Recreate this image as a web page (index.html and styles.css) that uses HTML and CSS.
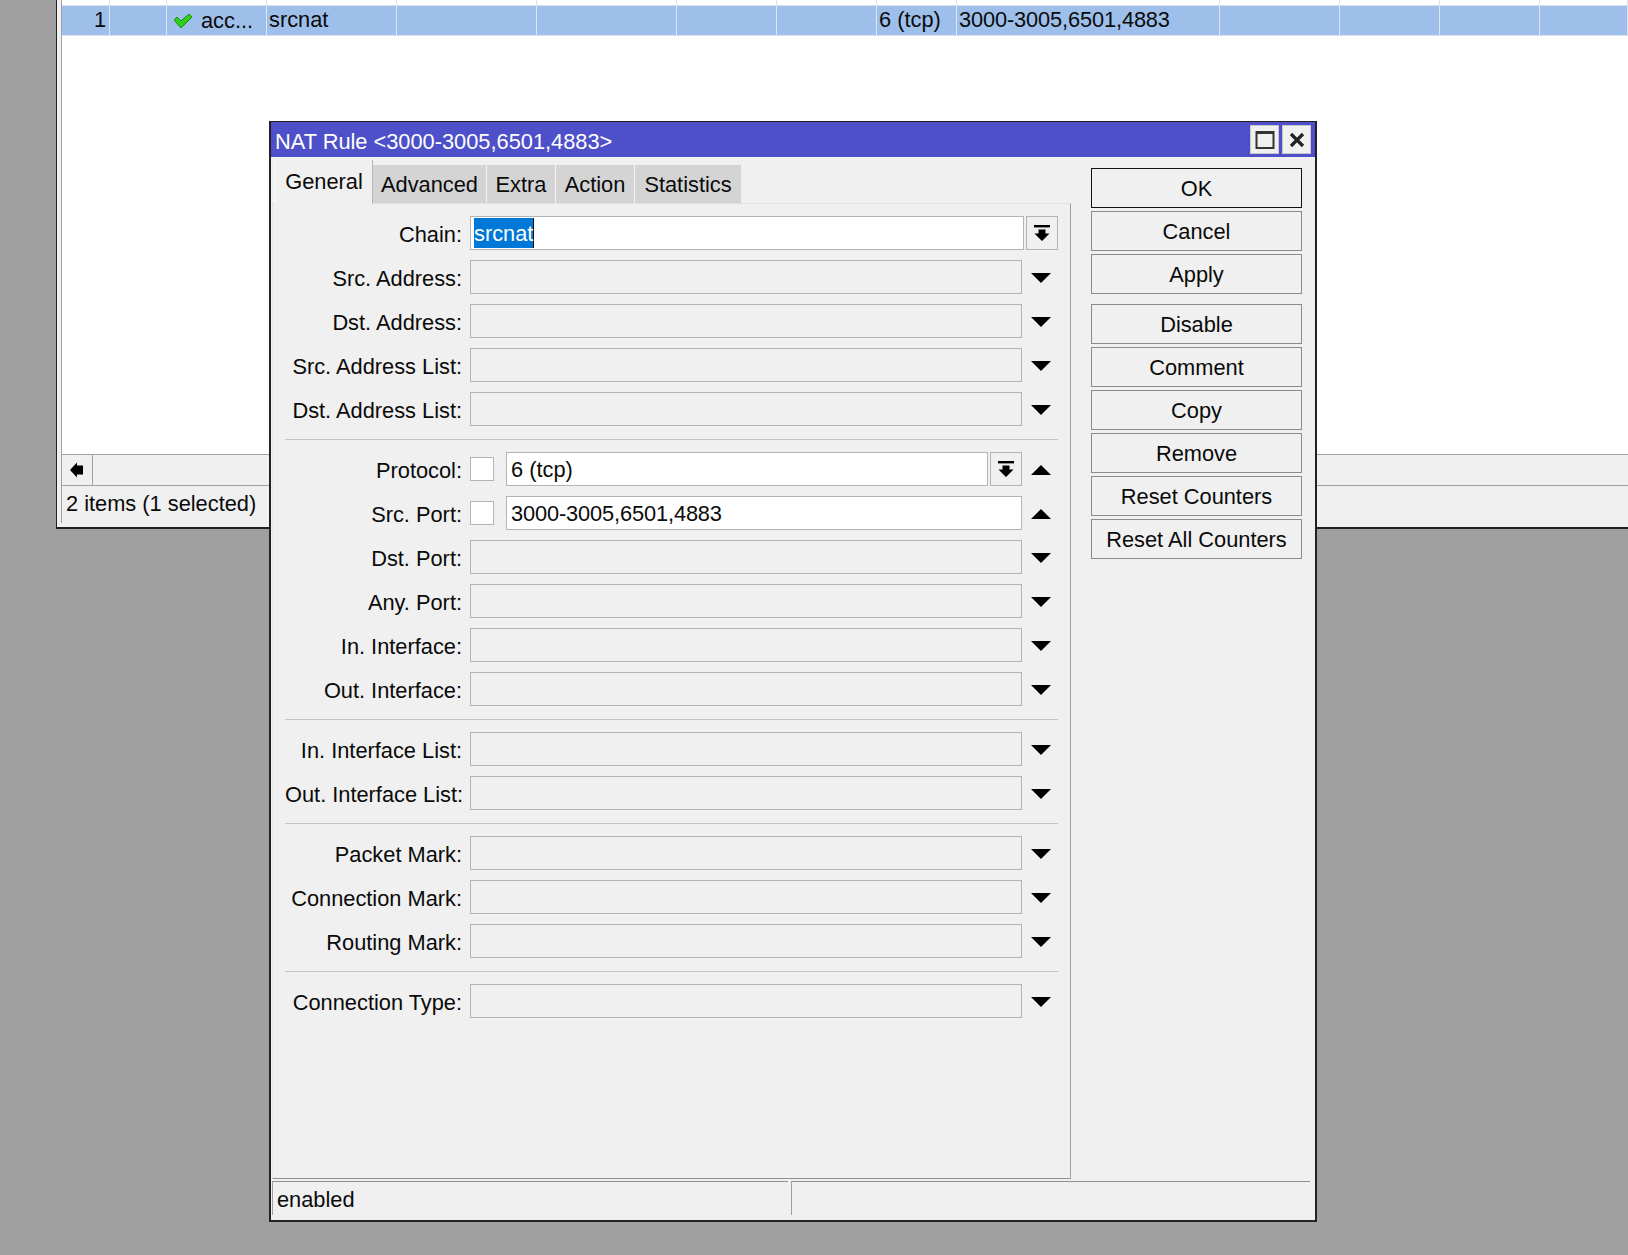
FILE: index.html
```html
<!DOCTYPE html>
<html lang="en">
<head>
    <meta charset="UTF-8">
    <title>NAT Rule</title>
    <link rel="stylesheet" href="styles.css">
</head>
<body>
    <div class="list-window">
        <div class="list-table">
            <div class="list-row list-row-blank">
                <span></span><span></span><span></span><span></span><span></span><span></span><span></span><span></span><span></span><span></span><span></span><span></span><span></span><span></span>
            </div>
            <div class="list-row list-row-selected">
                <span class="cell-num">1</span>
                <span></span>
                <span class="cell-action">
                    <svg class="check-icon" width="20" height="16" viewBox="0 0 20 16"><path d="M1 7 L4 4 L8 8 L16 1 L19 4 L8 15 Z" fill="#2fd016" stroke="#1c8a10" stroke-width="1"/></svg>
                    acc...
                </span>
                <span>srcnat</span>
                <span></span>
                <span></span>
                <span></span>
                <span></span>
                <span>6 (tcp)</span>
                <span class="digits">3000-3005,6501,4883</span>
                <span></span>
                <span></span>
                <span></span>
                <span></span>
            </div>
        </div>
        <div class="list-scroll">
            <div class="scroll-btn">
                <svg width="14" height="16" viewBox="0 0 14 16"><path d="M0 8 L7 0.5 V3.5 H13 V12.5 H7 V15.5 Z" fill="#000"/></svg>
            </div>
        </div>
        <div class="list-status">2 items (1 selected)</div>
    </div>

    <div class="dialog">
        <div class="title-bar">
            <span class="title-text">NAT Rule &lt;3000-3005,6501,4883&gt;</span>
            <button class="title-btn">
                <svg width="20" height="20" viewBox="0 0 20 20"><rect x="1.5" y="2" width="17" height="16" fill="none" stroke="#333" stroke-width="2"/><rect x="1" y="1" width="18" height="3" fill="#333"/></svg>
            </button>
            <button class="title-btn">
                <svg width="16" height="16" viewBox="0 0 16 16"><path d="M2 2 L14 14 M14 2 L2 14" stroke="#222" stroke-width="3.2" fill="none"/></svg>
            </button>
        </div>

        <div class="dialog-main">
            <div class="left-col">
                <div class="tabs">
                    <div class="tab tab-active">General</div>
                    <div class="tab tab-advanced">Advanced</div>
                    <div class="tab tab-extra">Extra</div>
                    <div class="tab tab-action">Action</div>
                    <div class="tab tab-stats">Statistics</div>
                </div>
                <div class="panel">
                    <div class="form-row">
                        <label>Chain:</label>
                        <div class="field field-white field-chain"><span class="selected-text">srcnat</span></div>
                        <div class="drop-btn">
                            <svg width="16" height="16" viewBox="0 0 16 16"><rect x="0" y="0" width="16" height="2.4" fill="#000"/><path d="M4.5 4.5 H11.5 V8.5 H15.5 L8 16 L0.5 8.5 H4.5 Z" fill="#000"/></svg>
                        </div>
                    </div>
                    <div class="form-row">
                        <label>Src. Address:</label>
                        <div class="field"></div>
                        <i class="arrow-down"></i>
                    </div>
                    <div class="form-row">
                        <label>Dst. Address:</label>
                        <div class="field"></div>
                        <i class="arrow-down"></i>
                    </div>
                    <div class="form-row">
                        <label>Src. Address List:</label>
                        <div class="field"></div>
                        <i class="arrow-down"></i>
                    </div>
                    <div class="form-row">
                        <label>Dst. Address List:</label>
                        <div class="field"></div>
                        <i class="arrow-down"></i>
                    </div>
                    <hr class="divider">
                    <div class="form-row">
                        <label>Protocol:</label>
                        <div class="not-box"></div>
                        <div class="field field-white field-grow">6 (tcp)</div>
                        <div class="drop-btn">
                            <svg width="16" height="16" viewBox="0 0 16 16"><rect x="0" y="0" width="16" height="2.4" fill="#000"/><path d="M4.5 4.5 H11.5 V8.5 H15.5 L8 16 L0.5 8.5 H4.5 Z" fill="#000"/></svg>
                        </div>
                        <i class="arrow-up"></i>
                    </div>
                    <div class="form-row">
                        <label>Src. Port:</label>
                        <div class="not-box"></div>
                        <div class="field field-white field-port digits">3000-3005,6501,4883</div>
                        <i class="arrow-up"></i>
                    </div>
                    <div class="form-row">
                        <label>Dst. Port:</label>
                        <div class="field"></div>
                        <i class="arrow-down"></i>
                    </div>
                    <div class="form-row">
                        <label>Any. Port:</label>
                        <div class="field"></div>
                        <i class="arrow-down"></i>
                    </div>
                    <div class="form-row">
                        <label>In. Interface:</label>
                        <div class="field"></div>
                        <i class="arrow-down"></i>
                    </div>
                    <div class="form-row">
                        <label>Out. Interface:</label>
                        <div class="field"></div>
                        <i class="arrow-down"></i>
                    </div>
                    <hr class="divider">
                    <div class="form-row">
                        <label>In. Interface List:</label>
                        <div class="field"></div>
                        <i class="arrow-down"></i>
                    </div>
                    <div class="form-row">
                        <label>Out. Interface List:</label>
                        <div class="field"></div>
                        <i class="arrow-down"></i>
                    </div>
                    <hr class="divider">
                    <div class="form-row">
                        <label>Packet Mark:</label>
                        <div class="field"></div>
                        <i class="arrow-down"></i>
                    </div>
                    <div class="form-row">
                        <label>Connection Mark:</label>
                        <div class="field"></div>
                        <i class="arrow-down"></i>
                    </div>
                    <div class="form-row">
                        <label>Routing Mark:</label>
                        <div class="field"></div>
                        <i class="arrow-down"></i>
                    </div>
                    <hr class="divider">
                    <div class="form-row">
                        <label>Connection Type:</label>
                        <div class="field"></div>
                        <i class="arrow-down"></i>
                    </div>
                </div>
            </div>

            <div class="button-col">
                <button class="btn btn-default">OK</button>
                <button class="btn">Cancel</button>
                <button class="btn">Apply</button>
                <button class="btn btn-spaced">Disable</button>
                <button class="btn">Comment</button>
                <button class="btn">Copy</button>
                <button class="btn">Remove</button>
                <button class="btn">Reset Counters</button>
                <button class="btn">Reset All Counters</button>
            </div>
        </div>

        <div class="status-bar">
            <div class="status-cell">enabled</div>
            <div class="status-rest"></div>
        </div>
    </div>
</body>
</html>
```

FILE: styles.css
```css
:root {
    --bg-color: #f0f0f0;
    --border-color: #a0a0a0;
    --text-color: #0a0a0a;
}

* {
    box-sizing: border-box;
    margin: 0;
    padding: 0;
}

html, body {
    height: 100%;
    overflow: hidden;
}

body {
    position: relative;
    background-color: #a0a0a0;
    color: var(--text-color);
    font-family: "Liberation Sans", Arial, sans-serif;
    font-size: 21.8px;
}

.digits {
    letter-spacing: -0.13px;
}

/* window behind the dialog */
.list-window {
    position: absolute;
    left: 56px;
    top: 0;
    width: 1572px;
    height: 529px;
    display: flex;
    flex-direction: column;
    background-color: var(--bg-color);
    border-left: 1px solid #222;
    border-bottom: 2px solid #222;
    padding-left: 4px;
    padding-bottom: 4px;
}

.list-table {
    height: 455px;
    background-color: white;
    border-left: 1px solid var(--border-color);
    border-bottom: 1px solid var(--border-color);
}

.list-row {
    display: grid;
    grid-template-columns: 48px 57px 100px 130px 140px 140px 100px 100px 80px 263px 120px 100px 100px 1fr;
}

.list-row > span {
    border-right: 1px solid #e2e2e2;
    padding-left: 2px;
}

.list-row-blank {
    height: 5px;
}

.list-row-selected {
    height: 31px;
    line-height: 28px;
    background-color: #9dbfea;
    border-top: 1px solid #dbe3ee;
    border-bottom: 1px solid #dbe3ee;
}

.list-row-selected > span {
    border-right-color: #dce8f6;
}

.list-row-selected .cell-num {
    text-align: right;
    padding-right: 3px;
}

.cell-action {
    display: flex;
    align-items: center;
    gap: 8px;
    padding-left: 6px !important;
}

.list-scroll {
    height: 31px;
    border-left: 1px solid var(--border-color);
    border-bottom: 1px solid var(--border-color);
}

.scroll-btn {
    width: 31px;
    height: 30px;
    display: flex;
    align-items: center;
    justify-content: center;
    border-right: 1px solid var(--border-color);
}

.list-status {
    flex: 1;
    line-height: 36px;
    padding-left: 4px;
    border-left: 1px solid var(--border-color);
}

/* NAT rule dialog */
.dialog {
    position: absolute;
    left: 269px;
    top: 121px;
    width: 1048px;
    height: 1101px;
    display: flex;
    flex-direction: column;
    background-color: var(--bg-color);
    border: 2px solid #222;
    border-top-width: 1px;
}

.title-bar {
    height: 35px;
    flex: none;
    display: flex;
    align-items: center;
    gap: 3px;
    padding-right: 4px;
    background-color: #4d50c9;
    color: white;
}

.title-text {
    flex: 1;
    padding-top: 4px;
    padding-left: 4px;
}

.title-btn {
    width: 29px;
    height: 29px;
    display: flex;
    align-items: center;
    justify-content: center;
    background-color: var(--bg-color);
    border: 1px solid #c8c8c8;
}

.dialog-main {
    flex: 1;
    display: flex;
    min-height: 0;
}

.left-col {
    width: 799px;
    margin-left: 1px;
    display: flex;
    flex-direction: column;
}

.tabs {
    height: 46px;
    flex: none;
    display: flex;
    align-items: flex-end;
    padding-left: 3px;
}

.tab {
    height: 38px;
    padding-top: 1px;
    display: flex;
    align-items: center;
    justify-content: center;
    background-color: #d4d4d4;
    border-right: 1px solid #f4f4f4;
}

.tab-active {
    width: 98px;
    height: 44px;
    padding-top: 0;
    background-color: var(--bg-color);
    border-left: 1px solid #fafafa;
    border-right: 1px solid #b8b8b8;
    margin-bottom: -1px;
    position: relative;
}

.tab-advanced { width: 114px; }
.tab-extra { width: 69px; }
.tab-action { width: 79px; }
.tab-stats { width: 106px; border-right: none; }

.panel {
    flex: 1;
    padding: 12px 0 0 12px;
    border-top: 1px solid #e2e2e2;
    border-left: 1px solid #e6e6e6;
    border-right: 1px solid var(--border-color);
    border-bottom: 1px solid #909090;
}

.form-row {
    display: flex;
    align-items: center;
    height: 34px;
    margin-bottom: 10px;
}

.form-row label {
    width: 177px;
    margin-right: 8px;
    padding-top: 3px;
    text-align: right;
    white-space: nowrap;
}

.field {
    width: 552px;
    height: 34px;
    line-height: 33px;
    padding-left: 4px;
    background-color: var(--bg-color);
    border: 1px solid #b4b4b4;
}

.field-white {
    background-color: white;
}

.field-chain {
    width: 554px;
    padding-left: 3px;
    padding-top: 1px;
    line-height: 30px;
}

.selected-text {
    display: inline-block;
    height: 30px;
    line-height: 32px;
    background-color: #0078d7;
    color: white;
    border-right: 1px solid #111;
}

.field-grow {
    width: 482px;
}

.field-port {
    width: 516px;
}

.not-box {
    width: 24px;
    height: 24px;
    margin-right: 12px;
    background-color: white;
    border: 1px solid #b4b4b4;
}

.drop-btn {
    width: 32px;
    height: 34px;
    margin-left: 2px;
    display: flex;
    align-items: center;
    justify-content: center;
    border: 1px solid #b4b4b4;
}

.arrow-down, .arrow-up {
    width: 0;
    height: 0;
    margin-left: 9px;
    border-left: 10px solid transparent;
    border-right: 10px solid transparent;
}

.arrow-down {
    margin-top: 2px;
    border-top: 10px solid #000;
}

.arrow-up {
    margin-top: 2px;
    border-bottom: 10px solid #000;
}

.divider {
    height: 1px;
    width: 773px;
    margin: 13px 0 12px;
    border: none;
    background-color: #c4c4c4;
}

.button-col {
    width: 211px;
    margin-left: 20px;
    padding-top: 11px;
    display: flex;
    flex-direction: column;
    gap: 3px;
}

.btn {
    height: 40px;
    flex: none;
    padding-top: 1px;
    background-color: var(--bg-color);
    border: 1px solid #8c8c8c;
    color: var(--text-color);
    font-family: inherit;
    font-size: inherit;
}

.btn-default {
    border-color: #111;
}

.btn-spaced {
    margin-top: 7px;
}

.status-bar {
    height: 41px;
    flex: none;
    display: flex;
    padding: 2px 5px 5px 1px;
}

.status-cell {
    width: 516px;
    line-height: 35px;
    padding-left: 4px;
    border-top: 1px solid #909090;
    border-left: 1px solid var(--border-color);
}

.status-rest {
    flex: 1;
    margin-left: 3px;
    border-top: 1px solid #909090;
    border-left: 1px solid var(--border-color);
}
```
